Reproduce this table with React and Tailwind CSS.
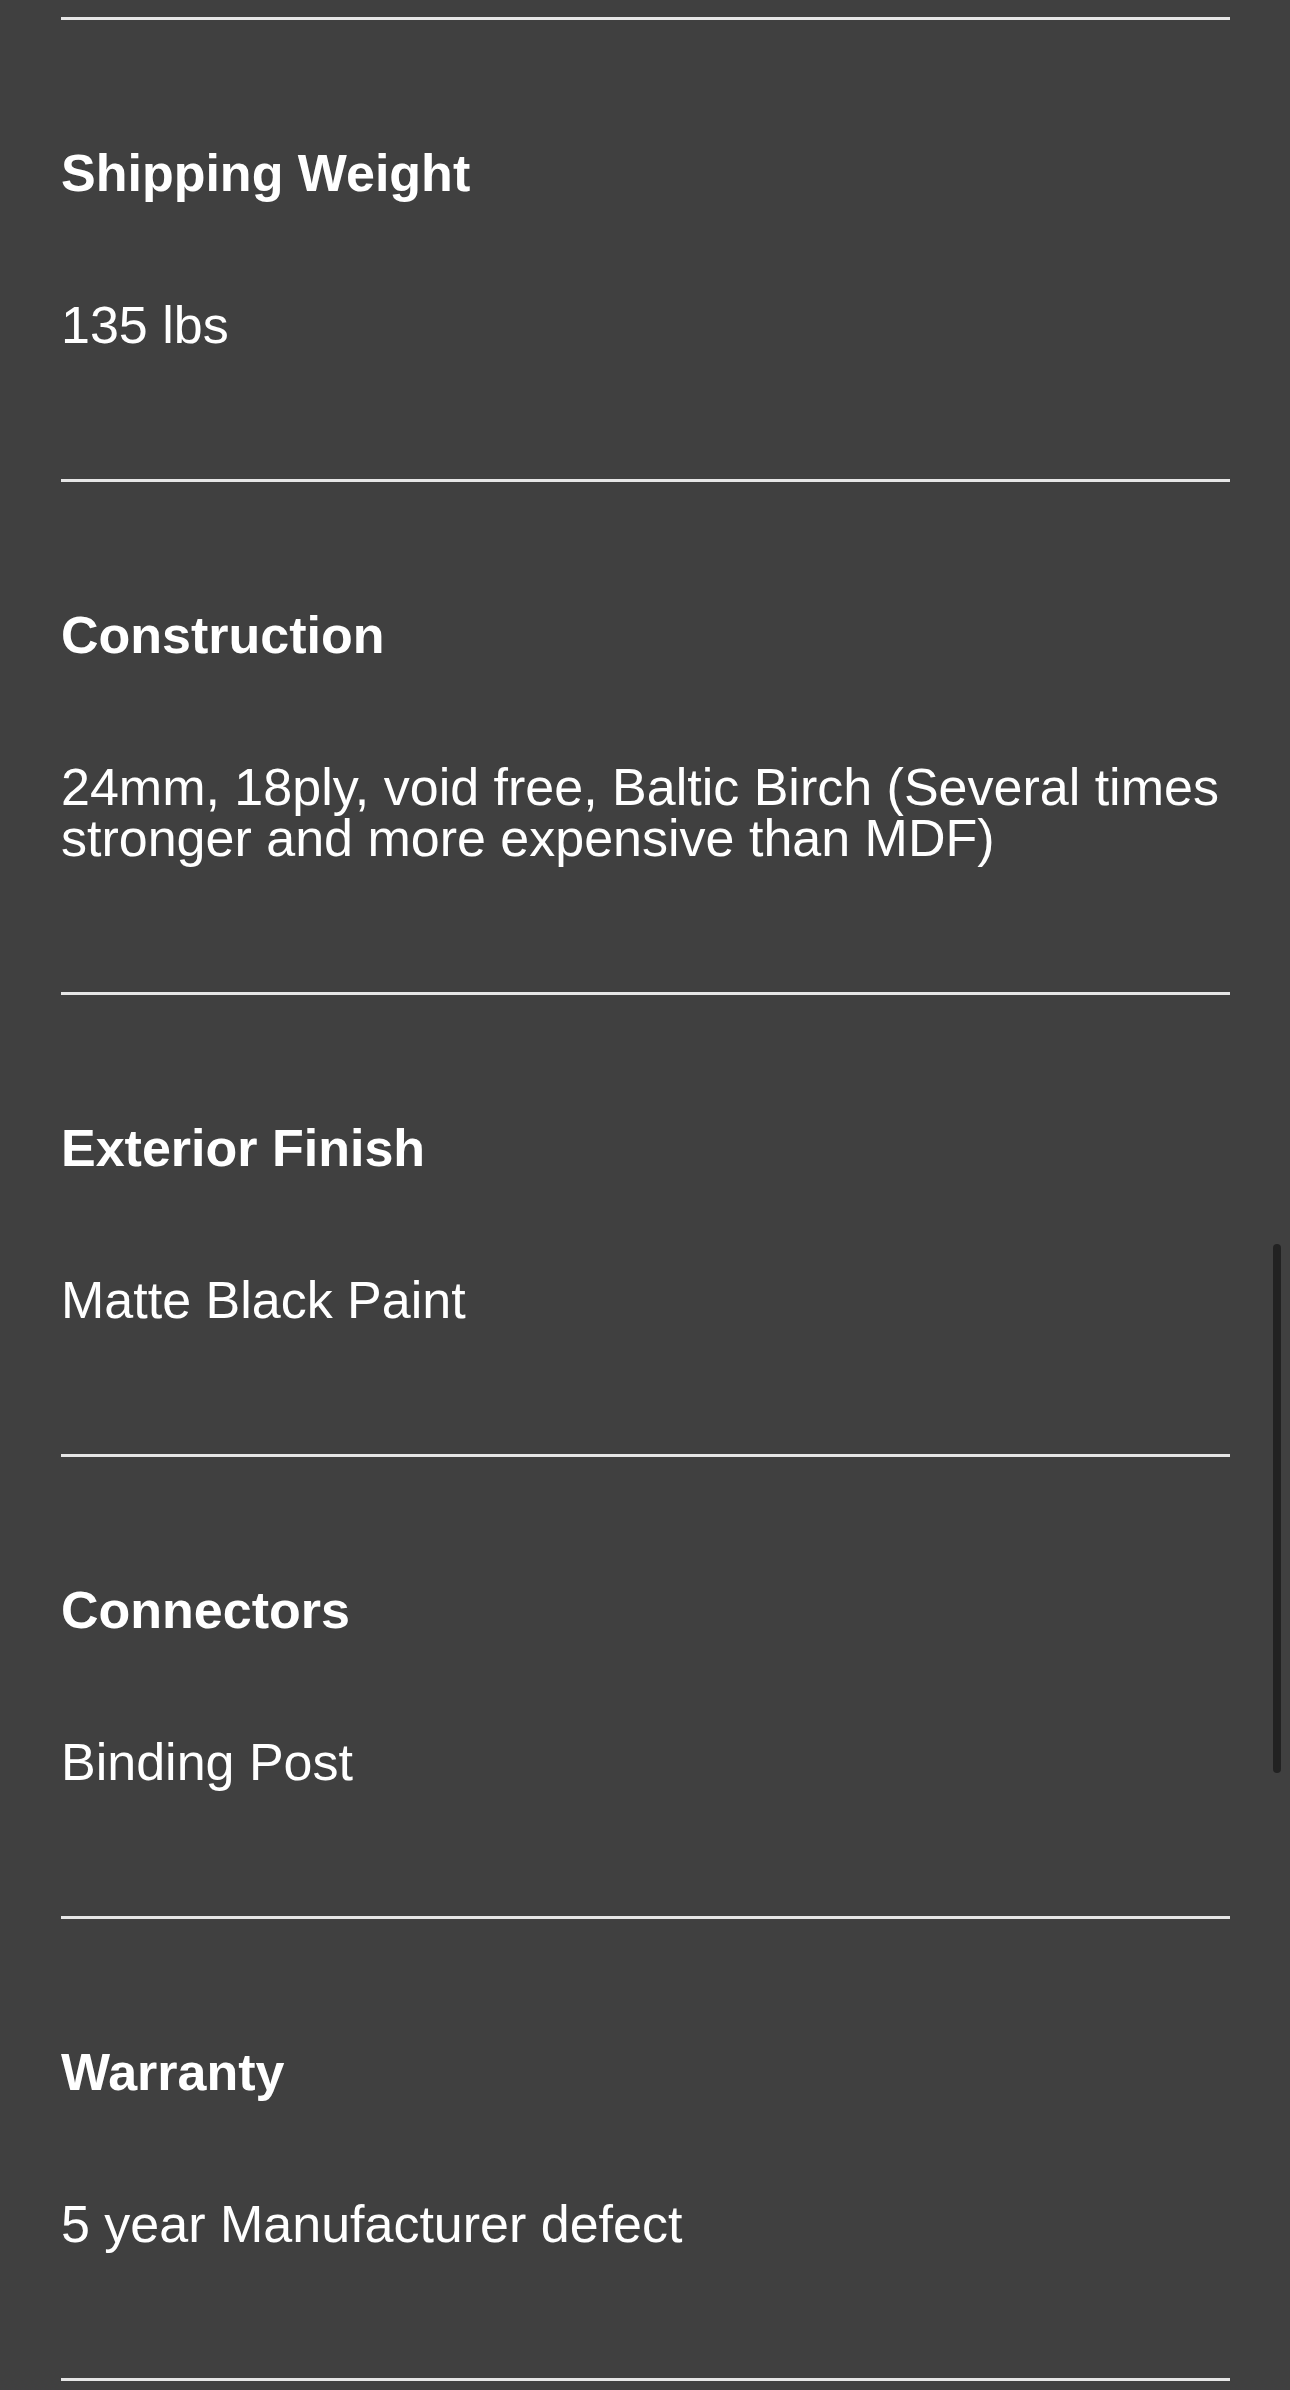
import React from 'react';

const SPECS = [
  { label: 'Shipping Weight', value: '135 lbs' },
  { label: 'Construction', value: '24mm, 18ply, void free, Baltic Birch (Several times stronger and more expensive than MDF)' },
  { label: 'Exterior Finish', value: 'Matte Black Paint' },
  { label: 'Connectors', value: 'Binding Post' },
  { label: 'Warranty', value: '5 year Manufacturer defect' },
];

function SpecRow({ label, value }) {
  return (
    <div className="pt-[128px] pb-[128px] border-b-[3px] border-[#e6e6e6]">
      <h3 className="text-[52px] leading-[51px] font-bold text-white">{label}</h3>
      <p className="mt-[101px] text-[52px] leading-[51px] text-white">{value}</p>
    </div>
  );
}

export default function App() {
  return (
    <div
      className="relative min-h-[2390px] bg-[#404040] overflow-hidden"
      style={{ fontFamily: '"Liberation Sans", Arial, sans-serif' }}
    >
      <div className="pl-[61px] pr-[60px]">
        <div className="h-[20px] border-b-[3px] border-[#e6e6e6]" />
        {SPECS.map((s) => (
          <SpecRow key={s.label} {...s} />
        ))}
      </div>
      {/* scrollbar thumb */}
      <div className="absolute right-[9px] top-[1244px] w-[8px] h-[529px] rounded-full bg-[#222222]" />
    </div>
  );
}
